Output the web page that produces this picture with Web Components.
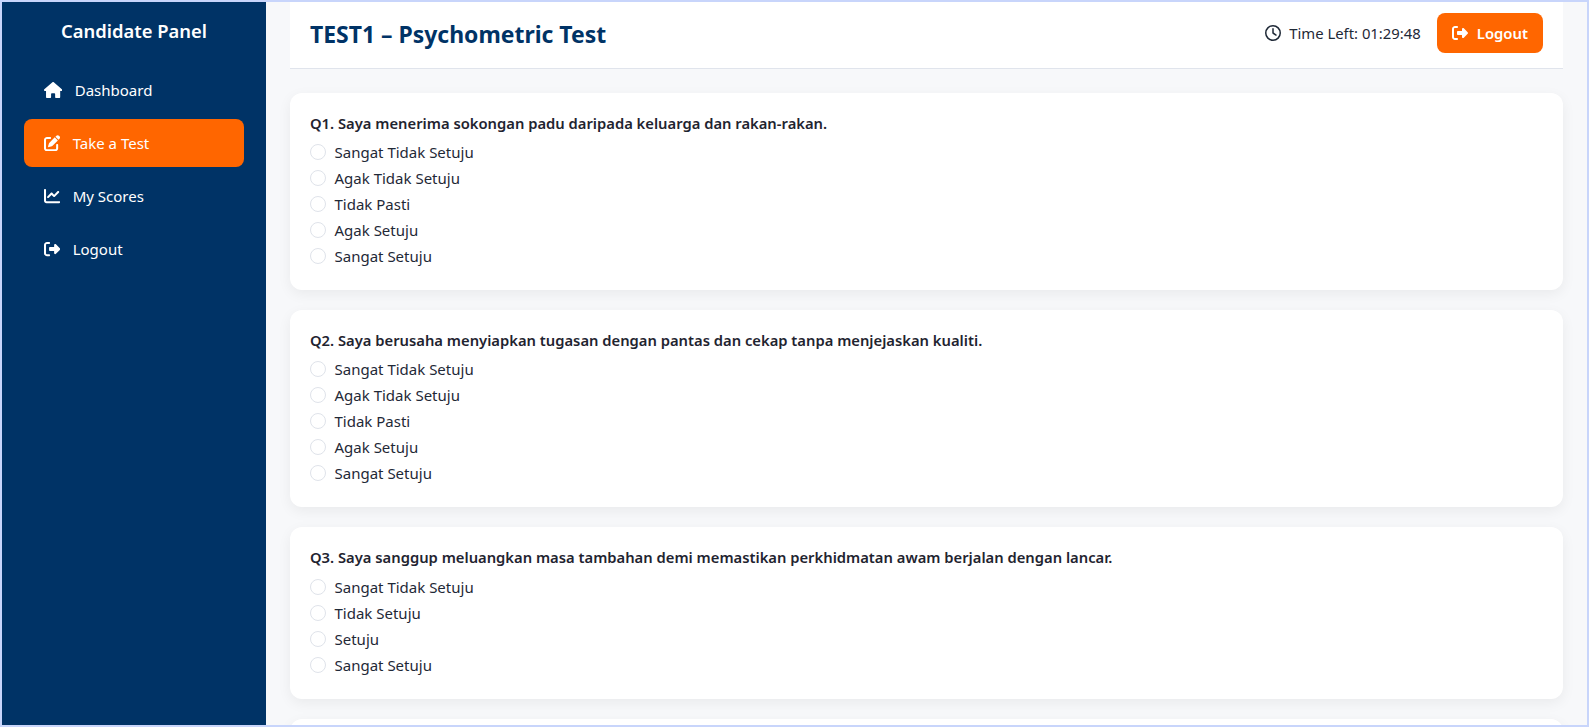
<!DOCTYPE html>
<html lang="ms">
<head>
<meta charset="utf-8">
<title>TEST1 – Psychometric Test</title>
<style>
  html, body { height: 100%; margin: 0; }
  html { background: #c8d5fb; }
  body {
    box-sizing: border-box;
    padding: 2px;
    overflow: hidden;
    font-family: "Noto Sans", "Open Sans", sans-serif;
  }
  test-page { height: 100%; }
</style>
</head>
<body>
<test-page>
  <side-nav slot="nav" heading="Candidate Panel">
    <nav-item icon="home">Dashboard</nav-item>
    <nav-item icon="edit" active>Take a Test</nav-item>
    <nav-item icon="chart">My Scores</nav-item>
    <nav-item icon="logout">Logout</nav-item>
  </side-nav>
  <top-bar heading="TEST1 – Psychometric Test" time="01:29:48"></top-bar>
  <question-card text="Q1. Saya menerima sokongan padu daripada keluarga dan rakan-rakan.">
    <radio-option>Sangat Tidak Setuju</radio-option>
    <radio-option>Agak Tidak Setuju</radio-option>
    <radio-option>Tidak Pasti</radio-option>
    <radio-option>Agak Setuju</radio-option>
    <radio-option>Sangat Setuju</radio-option>
  </question-card>
  <question-card text="Q2. Saya berusaha menyiapkan tugasan dengan pantas dan cekap tanpa menjejaskan kualiti.">
    <radio-option>Sangat Tidak Setuju</radio-option>
    <radio-option>Agak Tidak Setuju</radio-option>
    <radio-option>Tidak Pasti</radio-option>
    <radio-option>Agak Setuju</radio-option>
    <radio-option>Sangat Setuju</radio-option>
  </question-card>
  <question-card text="Q3. Saya sanggup meluangkan masa tambahan demi memastikan perkhidmatan awam berjalan dengan lancar.">
    <radio-option>Sangat Tidak Setuju</radio-option>
    <radio-option>Tidak Setuju</radio-option>
    <radio-option>Setuju</radio-option>
    <radio-option>Sangat Setuju</radio-option>
  </question-card>
  <question-card></question-card>
</test-page>

<script>
const ICONS = {
  home: ['0 0 576 512', 'M575.8 255.5c0 18-15 32.1-32 32.1h-32l.7 160.2c0 2.7-.2 5.4-.5 8.1V472c0 22.1-17.9 40-40 40H456c-1.1 0-2.2 0-3.3-.1c-1.4 .1-2.8 .1-4.2 .1H416 392c-22.1 0-40-17.9-40-40V448 384c0-17.7-14.3-32-32-32H256c-17.7 0-32 14.3-32 32v64 24c0 22.1-17.9 40-40 40H160 128.1c-1.5 0-3-.1-4.5-.2c-1.2 .1-2.4 .2-3.6 .2H104c-22.1 0-40-17.9-40-40V360c0-.9 0-1.9 .1-2.8V287.6H32c-18 0-32-14-32-32.1c0-9 3-17 10-24L266.4 8c7-7 15-8 22-8s15 2 21 7L564.8 231.5c8 7 12 15 11 24z'],
  edit: ['0 0 512 512', 'M471.6 21.7c-21.9-21.9-57.3-21.9-79.2 0L362.3 51.7l97.9 97.9 30.1-30.1c21.9-21.9 21.9-57.3 0-79.2L471.6 21.7zm-299.2 220c-6.1 6.1-10.8 13.6-13.5 21.9l-29.6 88.8c-2.9 8.6-.6 18.1 5.8 24.6s15.9 8.7 24.6 5.8l88.8-29.6c8.2-2.7 15.7-7.4 21.9-13.5L437.7 172.3 339.7 74.3 172.4 241.7zM96 64C43 64 0 107 0 160V416c0 53 43 96 96 96H352c53 0 96-43 96-96V320c0-17.7-14.3-32-32-32s-32 14.3-32 32v96c0 17.7-14.3 32-32 32H96c-17.7 0-32-14.3-32-32V160c0-17.7 14.3-32 32-32h96c17.7 0 32-14.3 32-32s-14.3-32-32-32H96z'],
  chart: ['0 0 512 512', 'M64 64c0-17.7-14.3-32-32-32S0 46.3 0 64V400c0 44.2 35.8 80 80 80H480c17.7 0 32-14.3 32-32s-14.3-32-32-32H80c-8.8 0-16-7.2-16-16V64zm406.6 86.6c12.5-12.5 12.5-32.8 0-45.3s-32.8-12.5-45.3 0L320 210.7l-57.4-57.4c-12.5-12.5-32.8-12.5-45.3 0l-112 112c-12.5 12.5-12.5 32.8 0 45.3s32.8 12.5 45.3 0L240 221.3l57.4 57.4c12.5 12.5 32.8 12.5 45.3 0l128-128z'],
  logout: ['0 0 512 512', 'M377.9 105.9L500.7 228.7c7.2 7.2 11.3 17.1 11.3 27.3s-4.1 20.1-11.3 27.3L377.9 406.1c-6.4 6.4-15 9.9-24.1 9.9c-18.8 0-34-15.2-34-34V320H192c-17.7 0-32-14.3-32-32V224c0-17.7 14.3-32 32-32H320V129.9c0-18.8 15.2-34 34-34c9 0 17.6 3.6 24.1 9.9zM160 96H96c-17.7 0-32 14.3-32 32V384c0 17.7 14.3 32 32 32h64c17.7 0 32 14.3 32 32s-14.3 32-32 32H96c-53 0-96-43-96-96V128C0 75 43 32 96 32h64c17.7 0 32 14.3 32 32s-14.3 32-32 32z'],
  clock: ['0 0 512 512', 'M464 256A208 208 0 1 1 48 256a208 208 0 1 1 416 0zM0 256a256 256 0 1 0 512 0A256 256 0 1 0 0 256zM232 120V256c0 8 4 15.5 10.7 20l96 64c11 7.4 25.9 4.4 33.3-6.7s4.4-25.9-6.7-33.3L280 243.2V120c0-13.3-10.7-24-24-24s-24 10.7-24 24z']
};

function iconSvg(name, size) {
  const [box, d] = ICONS[name];
  const parts = box.split(' ');
  const w = size * parts[2] / parts[3];
  return `<svg width="${w}" height="${size}" viewBox="${box}" fill="currentColor" aria-hidden="true"><path d="${d}"/></svg>`;
}

class TestPage extends HTMLElement {
  constructor() {
    super();
    this.attachShadow({ mode: "open" });
    this.shadowRoot.innerHTML = `
    <style>
    :host {
      display: flex;
      background: #f7f8fa;
      overflow: hidden;
    }
    .nav { flex: 0 0 264px; display: flex; }
    main {
      flex: 1;
      min-width: 0;
      padding: 0 24px;
      overflow: hidden;
      display: flex;
      flex-direction: column;
    }
    </style>
    <div class="nav"><slot name="nav"></slot></div>
    <main><slot></slot></main>
    `;
  }
}

class SideNav extends HTMLElement {
  constructor() {
    super();
    this.attachShadow({ mode: "open" });
  }
  connectedCallback() {
    this.shadowRoot.innerHTML = `
    <style>
    :host {
      display: block;
      flex: 1;
      background: #003366;
      color: #fff;
      padding: 0 22px;
    }
    h2 {
      margin: 0;
      padding: 16px 0 0;
      height: 48px;
      font-size: 18.4px;
      line-height: 26px;
      font-weight: 600;
      text-align: center;
    }
    nav { display: flex; flex-direction: column; gap: 5px; }
    </style>
    <h2>${this.getAttribute("heading")}</h2>
    <nav><slot></slot></nav>
    `;
  }
}

class NavItem extends HTMLElement {
  constructor() {
    super();
    this.attachShadow({ mode: "open" });
  }
  connectedCallback() {
    this.shadowRoot.innerHTML = `
    <style>
    :host {
      display: flex;
      align-items: center;
      gap: 12.5px;
      height: 48px;
      padding: 0 20px;
      border-radius: 8px;
      font-size: 15px;
      color: #fff;
    }
    :host([active]) { background: #ff6600; }
    svg { display: block; flex: none; }
    </style>
    ${iconSvg(this.getAttribute("icon"), 16.2)}
    <span><slot></slot></span>
    `;
  }
}

class TopBar extends HTMLElement {
  constructor() {
    super();
    this.attachShadow({ mode: "open" });
  }
  connectedCallback() {
    this.shadowRoot.innerHTML = `
    <style>
    :host {
      display: flex;
      flex: none;
      align-items: center;
      justify-content: space-between;
      box-sizing: content-box;
      height: 62px;
      margin-bottom: 24px;
      padding: 0 20px 4px;
      background: #fff;
      border-bottom: 1px solid #e0e4ec;
    }
    h1 {
      margin: 2px 0 0;
      font-size: 22.95px;
      font-weight: 700;
      color: #003366;
    }
    .right { display: flex; align-items: center; gap: 16px; }
    .timer {
      display: flex;
      align-items: center;
      gap: 8px;
      font-size: 14.85px;
      color: #1f2937;
    }
    button {
      display: flex;
      align-items: center;
      gap: 9px;
      height: 40px;
      padding: 0 15px;
      border: 0;
      border-radius: 8px;
      background: #ff6600;
      color: #fff;
      font: 600 14.85px "Noto Sans", "Open Sans", sans-serif;
    }
    svg { display: block; }
    </style>
    <h1>${this.getAttribute("heading")}</h1>
    <div class="right">
      <span class="timer">${iconSvg("clock", 16)}<span>Time Left: ${this.getAttribute("time")}</span></span>
      <button type="button">${iconSvg("logout", 16)}<span>Logout</span></button>
    </div>
    `;
  }
}

class QuestionCard extends HTMLElement {
  constructor() {
    super();
    this.attachShadow({ mode: "open" });
  }
  connectedCallback() {
    this.shadowRoot.innerHTML = `
    <style>
    :host {
      display: block;
      flex: none;
      margin-bottom: 20px;
      padding: 20px 20px 21px;
      background: #fff;
      border-radius: 12px;
      box-shadow: 0 4px 14px rgba(0, 0, 0, 0.06);
    }
    p {
      margin: 0 0 6.2px;
      font-size: 14.77px;
      line-height: 20px;
      font-weight: 600;
      color: #1f2430;
    }
    </style>
    <p>${this.getAttribute("text") || ""}</p>
    <slot></slot>
    `;
  }
}

class RadioOption extends HTMLElement {
  constructor() {
    super();
    this.attachShadow({ mode: "open" });
    this.shadowRoot.innerHTML = `
    <style>
    :host {
      display: flex;
      align-items: center;
      gap: 8.5px;
      height: 26px;
      font-size: 15px;
      color: #1f2937;
    }
    i {
      flex: none;
      box-sizing: border-box;
      width: 16px;
      height: 16px;
      border: 1px solid #dfe3ea;
      border-radius: 50%;
      background: #fff;
    }
    </style>
    <i></i><span><slot></slot></span>
    `;
  }
}

customElements.define("test-page", TestPage);
customElements.define("side-nav", SideNav);
customElements.define("nav-item", NavItem);
customElements.define("top-bar", TopBar);
customElements.define("question-card", QuestionCard);
customElements.define("radio-option", RadioOption);
</script>
</body>
</html>
